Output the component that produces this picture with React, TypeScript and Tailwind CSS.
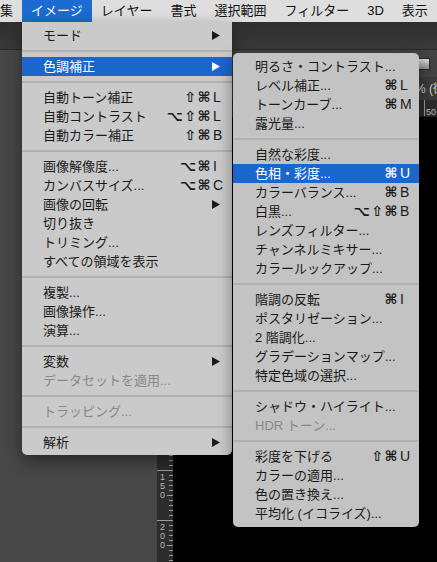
import React from 'react';

type Row =
  | { kind: 'sep' }
  | {
      kind: 'item';
      label: string;
      mods?: string;
      k?: string;
      sub?: boolean;
      disabled?: boolean;
      active?: boolean;
    };

const sep: Row = { kind: 'sep' };
const item = (label: string, opts: Omit<Extract<Row, { kind: 'item' }>, 'kind' | 'label'> = {}): Row => ({
  kind: 'item',
  label,
  ...opts,
});

const imageMenu: Row[] = [
  item('モード', { sub: true }),
  sep,
  item('色調補正', { sub: true, active: true }),
  sep,
  item('自動トーン補正', { mods: '⇧⌘', k: 'L' }),
  item('自動コントラスト', { mods: '⌥⇧⌘', k: 'L' }),
  item('自動カラー補正', { mods: '⇧⌘', k: 'B' }),
  sep,
  item('画像解像度...', { mods: '⌥⌘', k: 'I' }),
  item('カンバスサイズ...', { mods: '⌥⌘', k: 'C' }),
  item('画像の回転', { sub: true }),
  item('切り抜き'),
  item('トリミング...'),
  item('すべての領域を表示'),
  sep,
  item('複製...'),
  item('画像操作...'),
  item('演算...'),
  sep,
  item('変数', { sub: true }),
  item('データセットを適用...', { disabled: true }),
  sep,
  item('トラッピング...', { disabled: true }),
  sep,
  item('解析', { sub: true }),
];

const adjustMenu: Row[] = [
  item('明るさ・コントラスト...'),
  item('レベル補正...', { mods: '⌘', k: 'L' }),
  item('トーンカーブ...', { mods: '⌘', k: 'M' }),
  item('露光量...'),
  sep,
  item('自然な彩度...'),
  item('色相・彩度...', { mods: '⌘', k: 'U', active: true }),
  item('カラーバランス...', { mods: '⌘', k: 'B' }),
  item('白黒...', { mods: '⌥⇧⌘', k: 'B' }),
  item('レンズフィルター...'),
  item('チャンネルミキサー...'),
  item('カラールックアップ...'),
  sep,
  item('階調の反転', { mods: '⌘', k: 'I' }),
  item('ポスタリゼーション...'),
  item('2 階調化...'),
  item('グラデーションマップ...'),
  item('特定色域の選択...'),
  sep,
  item('シャドウ・ハイライト...'),
  item('HDR トーン...', { disabled: true }),
  sep,
  item('彩度を下げる', { mods: '⇧⌘', k: 'U' }),
  item('カラーの適用...'),
  item('色の置き換え...'),
  item('平均化 (イコライズ)...'),
];

const topMenus = ['レイヤー', '書式', '選択範囲', 'フィルター', '3D', '表示'];

function Arrow() {
  return (
    <svg width="8" height="9" viewBox="0 0 8 9" className="fill-current">
      <polygon points="0,0 8,4.5 0,9" />
    </svg>
  );
}

function MenuRows({ rows, inset }: { rows: Row[]; inset: string }) {
  return (
    <>
      {rows.map((r, i) => {
        if (r.kind === 'sep') {
          return (
            <div key={i} className="h-[12px] flex items-center">
              <div className="h-[2px] w-full bg-[#b1b1b1]" />
            </div>
          );
        }
        const color = r.active ? 'bg-[#1b66cc] text-white' : r.disabled ? 'text-[#888888]' : 'text-[#1a1a1a]';
        return (
          <div key={i} className={`flex items-center h-[19px] pr-[8px] ${inset} ${color}`}>
            <span className="flex-1 leading-[19px] whitespace-nowrap">{r.label}</span>
            {r.mods && (
              <span className="flex items-center">
                <span className="font-['DejaVu_Sans',sans-serif] font-bold text-[14px] tracking-[1.5px] leading-[19px]">
                  {r.mods}
                </span>
                <span className="w-[12px] pl-[1px] text-[14px] leading-[19px] font-['Liberation_Sans',sans-serif]">{r.k}</span>
              </span>
            )}
            {r.sub && (
              <span className="w-[12px] flex items-center">
                <Arrow />
              </span>
            )}
          </div>
        );
      })}
    </>
  );
}

function VerticalRuler() {
  const ticks = [];
  for (let v = 120; v <= 360; v += 5) {
    const y = v + 320 - 117;
    const len = v % 50 === 0 ? 16 : v % 25 === 0 ? 6 : 4;
    ticks.push(<line key={v} x1={16 - len} x2={16} y1={y + 0.5} y2={y + 0.5} stroke="#9a9a9a" strokeWidth="1" />);
  }
  const labels = [150, 200].map((v) => {
    const y = v + 320 - 117;
    return String(v)
      .split('')
      .map((d, j) => (
        <text key={`${v}-${j}`} x="3" y={y + 10 + j * 9} fontSize="9" fill="#b9b9b9" fontFamily="Liberation Sans, sans-serif">
          {d}
        </text>
      ));
  });
  return (
    <svg width="16" height="445" className="block">
      {ticks}
      {labels}
    </svg>
  );
}

export default function App() {
  return (
    <div className="relative w-[437px] h-[562px] overflow-hidden bg-[#474747] flex flex-col font-['Liberation_Sans','Noto_Sans_CJK_JP',sans-serif] text-[13px]">
      {/* mac menu bar */}
      <div className="h-[22px] bg-[#dedede] flex items-center text-[#111] shrink-0">
        <span className="pr-[9px] leading-[22px] whitespace-nowrap">集</span>
        <span className="px-[9px] leading-[22px] bg-[#1c6bd0] text-white">イメージ</span>
        {topMenus.map((m) => (
          <span key={m} className="px-[9px] leading-[22px] whitespace-nowrap">
            {m}
          </span>
        ))}
      </div>

      {/* photoshop chrome */}
      <div className="h-[28px] shrink-0 bg-gradient-to-b from-[#2e2e2e] to-[#3a3a3a] border-b border-[#2a2a2a]" />
      <div className="flex flex-1 min-h-0">
        <div className="w-[157px] shrink-0 bg-[#474747]" />
        <div className="flex-1 flex flex-col min-w-0">
          <div className="h-[27px] shrink-0 bg-[#434343] flex items-center pl-[261px]">
            <div className="w-[12px] h-[12px] border border-[#2a2a2a] bg-gradient-to-b from-[#dcdcdc] to-[#8c8c8c]" />
          </div>
          <div className="h-[23px] shrink-0 bg-[#3b3b3b] flex items-center pl-[258px] text-[12px] text-[#cfcfcf] whitespace-nowrap overflow-hidden">
            % (街
          </div>
          <div className="h-[17px] shrink-0 bg-[#2c2c2c] border-b border-[#222] overflow-hidden">
            <svg width="280" height="17" className="block">
              <line x1="267.5" x2="267.5" y1="0" y2="17" stroke="#9a9a9a" />
              <text x="269" y="15" fontSize="9" fill="#b9b9b9" fontFamily="Liberation Sans, sans-serif">
                50
              </text>
            </svg>
          </div>
          <div className="flex flex-1 min-h-0">
            <div className="w-[16px] shrink-0 bg-[#2c2c2c] overflow-hidden">
              <VerticalRuler />
            </div>
            <div className="flex-1 bg-black" />
          </div>
        </div>
      </div>

      {/* イメージ menu */}
      <div className="absolute left-[22px] top-[22px] w-[210px] pt-[4px] pb-[3px] bg-[#cacaca] rounded-b-[5px] shadow-[0_6px_16px_rgba(0,0,0,0.45)]">
        <MenuRows rows={imageMenu} inset="pl-[21px]" />
      </div>

      {/* 色調補正 submenu */}
      <div className="absolute left-[233px] top-[53px] w-[186px] pt-[4px] pb-[4px] bg-[#c3c3c3] rounded-[5px] shadow-[0_6px_16px_rgba(0,0,0,0.45)]">
        <MenuRows rows={adjustMenu} inset="pl-[22px]" />
      </div>
    </div>
  );
}
